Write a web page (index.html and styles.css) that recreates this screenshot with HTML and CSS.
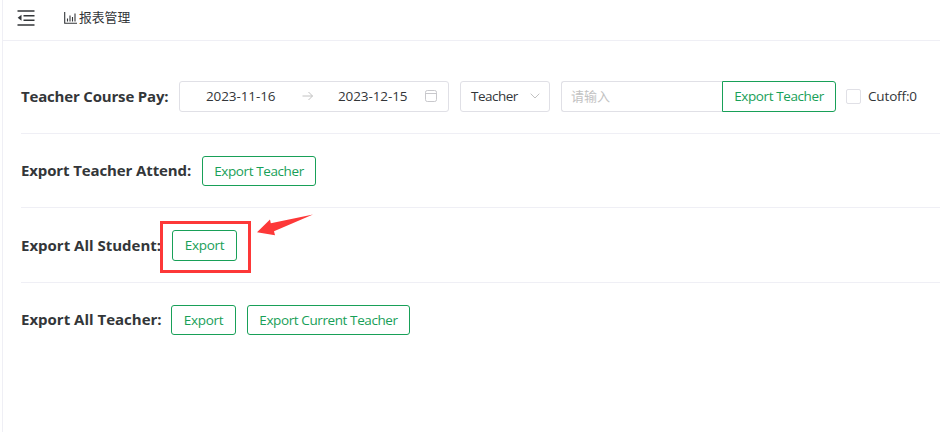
FILE: index.html
```html
<!DOCTYPE html>
<html lang="zh">
<head>
<meta charset="utf-8">
<title>报表管理</title>
<link rel="stylesheet" href="styles.css">
</head>
<body>
<div class="app">
  <header class="header">
    <svg class="fold" width="18" height="16" viewBox="0 0 18 16"><path d="M.5 1h17M6.5 5.7h11M6.5 10.3h11M.5 15h17" fill="none" stroke="#333639" stroke-width="1.5"/><path d="M4.5 4.7v6L.7 7.7z" fill="#333639"/></svg>
    <div class="crumb">
      <svg width="13" height="12" viewBox="0 0 13 12"><path d="M.7 0v11.2H13M3.5 9.5V6.5M6 9.5V3.5M8.5 9.5V5M11 9.5V1.5" fill="none" stroke="#333639" stroke-width="1.1"/></svg>
      <span>报表管理</span>
    </div>
  </header>
  <main class="main">
    <section class="row row-pay">
      <h2 class="label label-pay">Teacher Course Pay:</h2>
      <div class="field dates">
        <span class="date">2023-11-16</span>
        <svg class="arrow" width="12" height="10" viewBox="0 0 12 10"><path d="M.5 5h10M6.5 1l4 4-4 4" fill="none" stroke="#c2c2c2"/></svg>
        <span class="date">2023-12-15</span>
        <svg class="calendar" width="12" height="12" viewBox="0 0 12 12"><rect x=".5" y=".5" width="11" height="11" rx="1.8" fill="none" stroke="#c8c8cc"/><path d="M1 3.5h10" stroke="#c8c8cc"/></svg>
      </div>
      <div class="field select"><span class="word">Teacher</span><svg width="10" height="6" viewBox="0 0 10 6"><path d="M.7.7 5 5 9.3.7" fill="none" stroke="#c2c2c2"/></svg></div>
      <div class="group">
        <div class="field input">请输入</div>
        <button class="btn btn-teacher">Export Teacher</button>
      </div>
      <label class="check"><i class="box"></i><span class="cutoff">Cutoff:0</span></label>
    </section>
    <section class="row row-attend">
      <h2 class="label label-attend">Export Teacher Attend:</h2>
      <button class="btn btn-teacher">Export Teacher</button>
    </section>
    <section class="row row-student">
      <h2 class="label label-student">Export All Student:</h2>
      <div class="marked">
        <button class="btn btn-export">Export</button>
        <div class="frame"></div>
        <svg class="pointer" width="58" height="24" viewBox="0 0 58 24"><path d="M0 18.2 13 5.5l.8 3.8L56 .5 17 17.2l1 4z" fill="#fd3838"/></svg>
      </div>
    </section>
    <section class="row row-all">
      <h2 class="label label-all">Export All Teacher:</h2>
      <button class="btn btn-export">Export</button>
      <button class="btn btn-current">Export Current Teacher</button>
    </section>
  </main>
</div>
</body>
</html>
```
FILE: styles.css
```css
* { box-sizing: border-box; }
body {
  margin: 0;
  background: #fff;
  color: #333639;
  font: 13.5px/20px "Open Sans", "Noto Sans CJK SC", sans-serif;
  overflow: hidden;
}
svg { display: block; flex: none; }
.app { height: 432px; margin-left: 2px; border-left: 1px solid #efeff5; }
.header {
  display: flex;
  align-items: center;
  height: 41px;
  padding: 0 0 5px 14px;
  border-bottom: 1px solid #efeff5;
}
.crumb { display: flex; align-items: center; gap: 2px; margin-left: 29px; font: 12.8px/20px "Noto Sans CJK SC", sans-serif; }
.crumb span { margin-top: -1px; }
.main { padding-left: 18px; }
.row { display: flex; align-items: flex-start; border-bottom: 1px solid #efeff5; white-space: nowrap; }
.row-pay { height: 93px; padding-top: 40px; }
.row-attend { height: 74px; padding-top: 22px; }
.row-student { height: 75px; padding-top: 22px; }
.row-all { padding-top: 22px; border: 0; }
.label { flex: none; margin: 0; font-size: 15px; font-weight: 700; line-height: 31px; }
.label-pay { width: 158px; letter-spacing: -.18px; }
.label-attend { width: 181px; line-height: 29px; letter-spacing: -.12px; }
.label-student { width: 151px; }
.label-all { width: 150px; line-height: 29px; }
.field { display: flex; align-items: center; height: 31px; padding-bottom: 1px; border: 1px solid #e0e0e6; border-radius: 3px; }
.dates { width: 270px; padding-left: 26px; }
.date { width: 71px; letter-spacing: -.1px; }
.arrow { margin: 0 24px 0 25px; }
.calendar { margin-left: 16px; }
.select { width: 90px; margin-left: 11px; padding: 0 9px 1px 10px; justify-content: space-between; }
.word { letter-spacing: -.5px; }
.group { display: flex; margin-left: 11px; }
.input { width: 161px; padding-left: 9px; border-right: 0; border-radius: 3px 0 0 3px; color: #c2c2c2; font: 13px/20px "Noto Sans CJK SC", sans-serif; }
.btn {
  height: 31px;
  padding: 0 0 1px;
  border: 1px solid #18a058;
  border-radius: 3px;
  background: #fff;
  color: #18a058;
  font: inherit;
  letter-spacing: -.4px;
}
.row-attend .btn, .row-all .btn { height: 30px; }
.group .btn { border-radius: 0 3px 3px 0; }
.btn-teacher { width: 114px; }
.btn-export { width: 65px; letter-spacing: -.3px; }
.btn-current { width: 163px; margin-left: 11px; }
.check { display: flex; align-items: center; height: 31px; margin-left: 10px; }
.box { width: 15px; height: 15px; margin-right: 7px; border: 1px solid #e0e0e6; border-radius: 2px; }
.cutoff { margin-top: -2px; letter-spacing: -.15px; }
.marked { position: relative; }
.frame { position: absolute; left: -12px; top: -9px; width: 91px; height: 52px; border: 3px solid #fd3838; }
.pointer { position: absolute; left: 85px; top: -16px; }
```
